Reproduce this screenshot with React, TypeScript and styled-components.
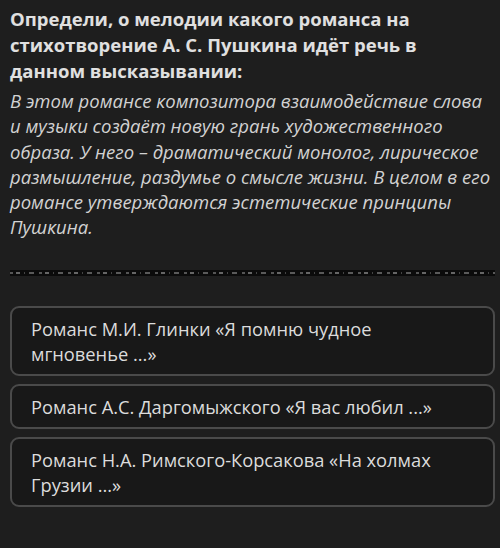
import React from 'react'
import styled, { createGlobalStyle } from 'styled-components'

const GlobalStyle = createGlobalStyle`
  html, body {
    margin: 0;
    background: #1e1e1e;
  }
  body {
    font-family: "Open Sans", "Noto Sans", sans-serif;
  }
`

const quoteLines = [
  'В этом романсе композитора взаимодействие слова',
  'и музыки создаёт новую грань художественного',
  'образа. У него – драматический монолог, лирическое',
  'размышление, раздумье о смысле жизни. В целом в его',
  'романсе утверждаются эстетические принципы',
  'Пушкина.',
]

const options = [
  'Романс М.И. Глинки «Я помню чудное мгновенье ...»',
  'Романс А.С. Даргомыжского «Я вас любил ...»',
  'Романс Н.А. Римского-Корсакова «На холмах Грузии ...»',
]

function App() {
  return (
    <Page>
      <GlobalStyle />
      <Question>
        Определи, о мелодии какого романса на стихотворение А. С. Пушкина идёт речь в данном высказывании:
      </Question>
      <Quote>
        {quoteLines.map((line, i) => (
          <React.Fragment key={i}>
            {line}
            {i < quoteLines.length - 1 && <br />}
          </React.Fragment>
        ))}
      </Quote>
      <Divider />
      <Options>
        {options.map((text) => (
          <Option key={text}>{text}</Option>
        ))}
      </Options>
    </Page>
  )
}

const Page = styled.div`
  width: 500px;
  height: 548px;
  background: #1e1e1e;
  padding: 6px 5px 0 10px;
  box-sizing: border-box;
  overflow: hidden;
`
const Question = styled.div`
  font-size: 18.5px;
  font-weight: 700;
  line-height: 26px;
  color: #e0e0e0;
  padding-right: 60px;
`
const Quote = styled.div`
  margin-top: 4px;
  font-size: 18.5px;
  font-style: italic;
  line-height: 25.3px;
  color: #d2d2d2;
  white-space: nowrap;
`
const Divider = styled.div`
  margin-top: 30px;
  height: 6px;
  background-color: #0b0b0b;
  background-image: repeating-linear-gradient(
    90deg,
    #555 0 3px,
    transparent 3px 6px,
    #666 6px 10px,
    transparent 10px 14px,
    #444 14px 15px,
    transparent 15px 19px,
    #5a5a5a 19px 24px,
    transparent 24px 29px
  );
  background-size: 100% 2px;
  background-repeat: no-repeat;
  background-position: 0 2px;
`
const Options = styled.div`
  margin-top: 30px;
  display: flex;
  flex-direction: column;
  gap: 8px;
`
const Option = styled.div`
  border: 2px solid #4a4a4a;
  border-radius: 9px;
  background: #181818;
  padding: 8px 60px 8px 19px;
  font-size: 18.3px;
  line-height: 25px;
  color: #dcdcdc;
`

export default App
